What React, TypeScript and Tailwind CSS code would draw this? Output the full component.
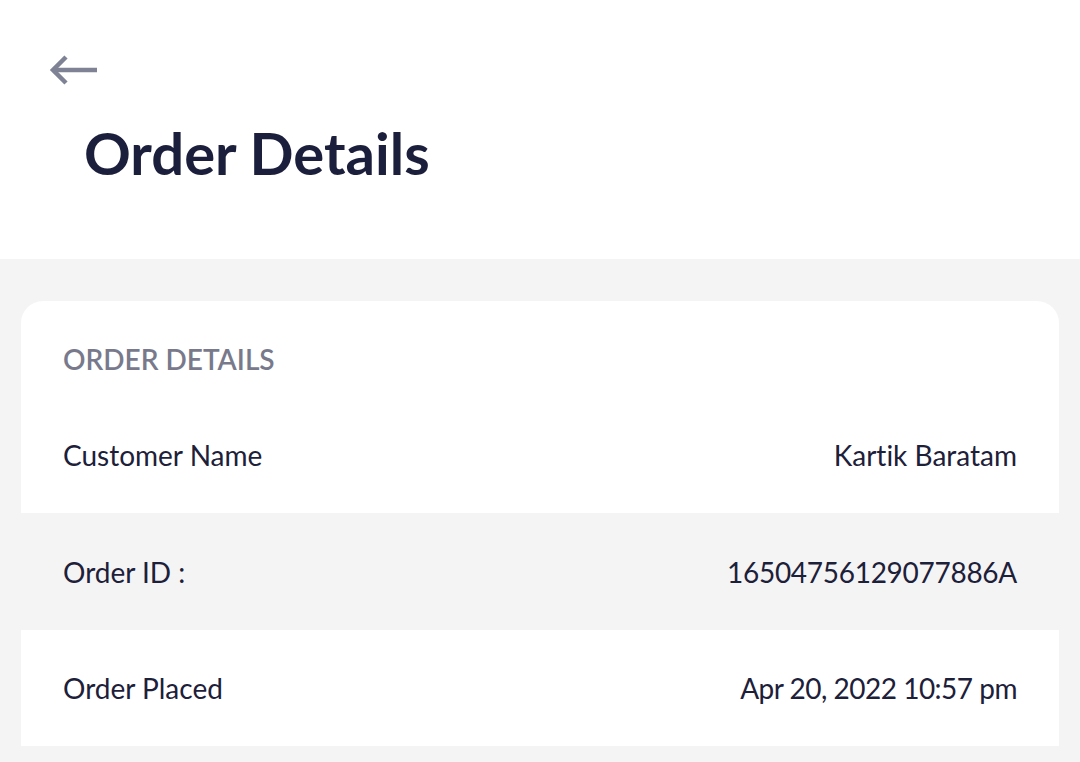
import React from "react";

const rows = [
  { label: "Order ID :", value: "16504756129077886A", white: false, track: "tracking-[-0.28px]" },
  { label: "Order Placed", value: "Apr 20, 2022 10:57 pm", white: true, track: "tracking-[-0.5px]" },
];

export default function App() {
  return (
    <div className="w-[1080px] h-[762px] overflow-hidden bg-[#f4f4f5] text-[#1d2039] [font-variant-ligatures:none]" style={{ fontFamily: "Lato, 'Noto Sans', sans-serif" }}>
      <div className="h-[259px] bg-white flex flex-col">
        <div className="pl-[49px] pt-[54px] h-[124px]">
          <svg width="50" height="32" viewBox="0 0 50 32" fill="none" stroke="#7f8295" strokeWidth="4.5" strokeLinecap="butt" strokeLinejoin="miter">
            <path d="M48 16H5" />
            <path d="M17 3L4 16L17 29" />
          </svg>
        </div>
        <h1 className="pl-[84px] text-[58px] font-bold leading-none text-[#1b1f3b]">Order Details</h1>
      </div>
      <div className="pt-[42px] px-[21px]">
        <div className="bg-white rounded-t-[22px] px-[42px]">
          <div className="h-[116px] flex items-center">
            <span className="text-[28px] font-semibold text-[#787a8c] leading-none">ORDER DETAILS</span>
          </div>
          <div className="h-[96px] flex items-center justify-between text-[28px] leading-none pb-[20px]">
            <span>Customer Name</span>
            <span>Kartik Baratam</span>
          </div>
        </div>
        {rows.map((r) => (
          <div
            key={r.label}
            className={`${r.white ? "bg-white h-[116px]" : "h-[117px]"} px-[42px] flex items-center justify-between text-[28px] leading-none`}
          >
            <span>{r.label}</span>
            <span className={r.track}>{r.value}</span>
          </div>
        ))}
      </div>
    </div>
  );
}
